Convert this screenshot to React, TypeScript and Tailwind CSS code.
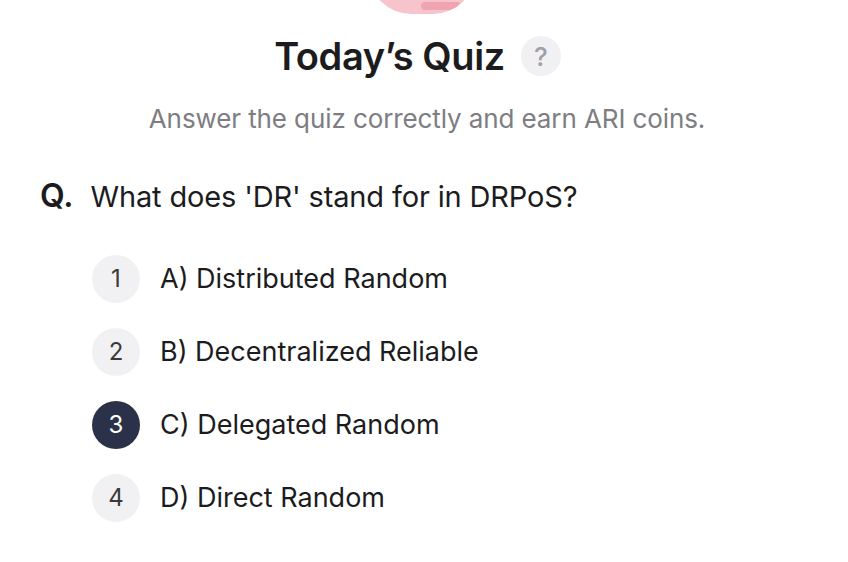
import React from 'react';

const options = [
  { n: 1, label: 'A) Distributed Random' },
  { n: 2, label: 'B) Decentralized Reliable' },
  { n: 3, label: 'C) Delegated Random' },
  { n: 4, label: 'D) Direct Random' },
];

export default function App() {
  const selected = 3;

  return (
    <div
      className="min-h-screen w-full overflow-hidden bg-white text-[#1c1c1e]"
      style={{ fontFamily: 'Inter, "Noto Sans", Arial, sans-serif' }}
    >
      {/* top illustration, mostly scrolled away */}
      <div className="flex justify-center">
        <div className="relative -mt-[58px] ml-[-4px] h-[72px] w-[106px] overflow-hidden rounded-b-[42px] bg-[#f7c3cd]">
          <div className="absolute bottom-[4px] left-[52px] h-[8px] w-[40px] rounded-full bg-[#f0a3b1]" />
        </div>
      </div>

      <div className="mt-[22px] flex items-center justify-center gap-[16px] pr-[13px]">
        <h1 className="text-[38px] font-semibold leading-[40px] tracking-[-0.4px]">Today’s Quiz</h1>
        <div className="flex h-[40px] w-[40px] items-center justify-center rounded-full bg-[#f1f1f3] text-[26px] font-medium text-[#a0a0a5]">
          ?
        </div>
      </div>

      <p className="mt-[28px] pl-[6px] text-center text-[26px] leading-[30px] tracking-[-0.1px] text-[#7d7d82]">
        Answer the quiz correctly and earn ARI coins.
      </p>

      <div className="mt-[44px] flex items-baseline gap-[17px] pl-[40px]">
        <span className="text-[32px] font-semibold leading-[36px]">Q.</span>
        <span className="text-[29px] leading-[36px] tracking-[-0.15px]">What does 'DR' stand for in DRPoS?</span>
      </div>

      <ul className="mt-[40px] flex flex-col gap-[25px] pl-[92px]">
        {options.map((o) => (
          <li key={o.n} className="flex items-center gap-[20px]">
            <span
              className={
                o.n === selected
                  ? 'flex h-[48px] w-[48px] items-center justify-center rounded-full bg-[#2b3148] text-[24px] text-white'
                  : 'flex h-[48px] w-[48px] items-center justify-center rounded-full bg-[#f1f1f3] text-[24px] text-[#3a3a3c]'
              }
            >
              {o.n}
            </span>
            <span className="text-[27px] leading-[36px]">{o.label}</span>
          </li>
        ))}
      </ul>
    </div>
  );
}
